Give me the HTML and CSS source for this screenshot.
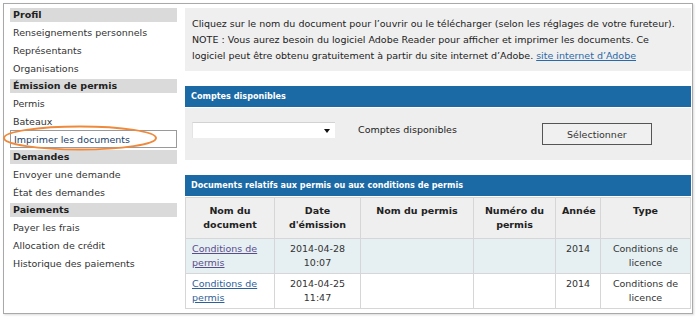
FILE: index.html
```html
<!DOCTYPE html>
<html lang="fr">
  <head>
    <meta charset="UTF-8" />
    <title>Imprimer les documents</title>
    <link rel="stylesheet" href="styles.css">
  </head>
  <body>
    <div class="frame">
      <div class="sidebar">
        <div class="group">
          <h2>Profil</h2>
          <a href="#">Renseignements personnels</a>
          <a href="#">Représentants</a>
          <a href="#">Organisations</a>
        </div>
        <div class="group">
          <h2>Émission de permis</h2>
          <a href="#">Permis</a>
          <a href="#">Bateaux</a>
          <a href="#" class="current">Imprimer les documents</a>
        </div>
        <div class="group">
          <h2>Demandes</h2>
          <a href="#">Envoyer une demande</a>
          <a href="#">État des demandes</a>
        </div>
        <div class="group">
          <h2>Paiements</h2>
          <a href="#">Payer les frais</a>
          <a href="#">Allocation de crédit</a>
          <a href="#">Historique des paiements</a>
        </div>
      </div>

      <div class="main">
        <div class="notice">
          Cliquez sur le nom du document pour l’ouvrir ou le télécharger (selon les réglages de votre fureteur).<br />
          NOTE : Vous aurez besoin du logiciel Adobe Reader pour afficher et imprimer les documents. Ce logiciel peut être obtenu gratuitement à partir du site internet d’Adobe. <a href="#">site internet d’Adobe</a>
        </div>

        <div class="panel">
          <div class="panel-title">Comptes disponibles</div>
          <div class="panel-body accounts">
            <div class="select"></div>
            <span class="accounts-label">Comptes disponibles</span>
            <button class="btn">Sélectionner</button>
          </div>
        </div>

        <div class="panel">
          <div class="panel-title">Documents relatifs aux permis ou aux conditions de permis</div>
          <table class="docs">
            <colgroup>
              <col class="c-doc" />
              <col class="c-date" />
              <col class="c-name" />
              <col class="c-num" />
              <col class="c-year" />
              <col class="c-type" />
            </colgroup>
            <thead>
              <tr>
                <th>Nom du document</th>
                <th>Date d'émission</th>
                <th>Nom du permis</th>
                <th>Numéro du permis</th>
                <th>Année</th>
                <th>Type</th>
              </tr>
            </thead>
            <tbody>
              <tr class="alt">
                <td class="doc"><a href="#" class="visited">Conditions de permis</a></td>
                <td>2014-04-28<br />10:07</td>
                <td></td>
                <td></td>
                <td>2014</td>
                <td>Conditions de licence</td>
              </tr>
              <tr>
                <td class="doc"><a href="#">Conditions de permis</a></td>
                <td>2014-04-25<br />11:47</td>
                <td></td>
                <td></td>
                <td>2014</td>
                <td>Conditions de licence</td>
              </tr>
            </tbody>
          </table>
        </div>
      </div>
    </div>

    <svg class="callout" width="700" height="319" viewBox="0 0 700 319">
      <ellipse cx="80" cy="138" rx="76" ry="11.5" fill="none" stroke="#ef8a3c" stroke-width="2" />
    </svg>
  </body>
</html>
```

FILE: styles.css
```css
* {
  padding: 0;
  margin: 0;
  box-sizing: border-box;
}

body {
  position: relative;
  width: 700px;
  height: 319px;
  overflow: hidden;
  background: #fff;
  font-family: "DejaVu Sans", Verdana, sans-serif;
  font-size: 9.5px;
  color: #333;
}

.frame {
  display: flex;
  margin: 3px;
  width: 690px;
  height: 311px;
  padding: 4px 2px 0 6px;
  border: 1px solid #a9a9a9;
  box-shadow: 1px 1px 2px rgba(0, 0, 0, 0.15);
  overflow: hidden;
}

/* left menu */
.sidebar {
  width: 167px;
  flex-shrink: 0;
}

.group {
  display: flex;
  flex-direction: column;
  padding-bottom: 2px;
}

.group h2 {
  height: 14px;
  line-height: 14px;
  padding-left: 3px;
  margin-bottom: 1px;
  background: #dadada;
  color: #222;
  font-size: 9.5px;
  font-weight: bold;
}

.group a {
  height: 18px;
  line-height: 17px;
  padding-left: 3px;
  color: #333;
  text-decoration: none;
  border: 1px solid transparent;
  border-left: 0;
}

.group a.current {
  border: 1px solid #9a9a9a;
  color: #1d3f6a;
}

/* content */
.main {
  flex: 1;
  margin-left: 8px;
}

.notice {
  height: 63px;
  padding: 8px 7px 0;
  background: #efefef;
  line-height: 16px;
  color: #222;
}

.notice a {
  color: #2c69a8;
}

.panel {
  margin-top: 15px;
}

.panel-title {
  height: 21px;
  line-height: 21px;
  padding-left: 6px;
  background: #1b69a5;
  color: #fff;
  font-family: "DejaVu Sans Condensed", "Liberation Sans", sans-serif;
  font-weight: bold;
  font-size: 9px;
  margin-bottom: 1px;
}

.panel-body {
  background: #eeeeee;
}

.accounts {
  display: flex;
  align-items: flex-start;
  height: 52px;
  padding: 14px 0 0 7px;
}

.select {
  position: relative;
  width: 143px;
  height: 16px;
  background: #fff;
  border-top: 1px solid #d2d2d2;
  border-left: 1px solid #e4e4e4;
}

.select::after {
  content: "";
  position: absolute;
  right: 5px;
  top: 6px;
  border-left: 3px solid transparent;
  border-right: 3px solid transparent;
  border-top: 4px solid #111;
}

.accounts-label {
  margin-left: 23px;
  line-height: 16px;
  color: #222;
}

.btn {
  margin-left: 85px;
  margin-top: 1px;
  width: 110px;
  height: 22px;
  background: #f0f0f0;
  border: 1px solid #555;
  font-family: "DejaVu Sans", Verdana, sans-serif;
  font-size: 9.5px;
  color: #333;
}

/* documents table */
.docs {
  width: 505px;
  border-collapse: collapse;
  table-layout: fixed;
  border: 1px solid #d6d6d6;
}

.c-doc { width: 89px; }
.c-date { width: 86px; }
.c-name { width: 113px; }
.c-num { width: 82px; }
.c-year { width: 45px; }
.c-type { width: 90px; }

.docs th,
.docs td {
  border: 1px solid #d6d6d6;
  text-align: center;
  line-height: 14px;
  vertical-align: top;
}

.docs th {
  height: 41px;
  padding: 6px 6px 0;
  background: #efefef;
  color: #222;
  font-weight: bold;
}

.docs td {
  height: 35px;
  padding: 3px 4px 0;
  color: #333;
}

.docs td.doc {
  text-align: left;
  padding-left: 6px;
}

.docs tr.alt td {
  background: #e6f0f2;
}

.docs a {
  color: #2f5f99;
}

.docs a.visited {
  color: #5a4c8c;
}

.callout {
  position: absolute;
  left: 0;
  top: 0;
  pointer-events: none;
}
```
